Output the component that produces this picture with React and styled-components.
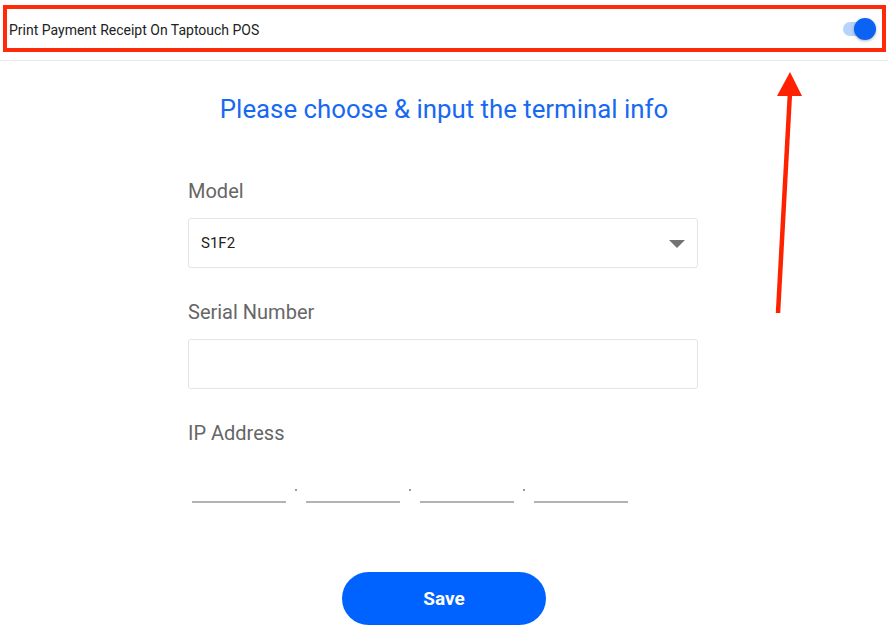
import React, { useState } from 'react'
import styled, { createGlobalStyle } from 'styled-components'

const GlobalStyle = createGlobalStyle`
  html, body {
    margin: 0;
    padding: 0;
    background: #ffffff;
  }
  body {
    font-family: Roboto, "Liberation Sans", Arial, sans-serif;
    color: #222;
  }
  * {
    box-sizing: border-box;
  }
`

const App = () => {
  const [printOn, setPrintOn] = useState(true)

  return (
    <Page>
      <GlobalStyle />
      <Header>
        <HeaderText>Print Payment Receipt On Taptouch POS</HeaderText>
        <Toggle on={printOn} onClick={() => setPrintOn(!printOn)}>
          <span className="track" />
          <span className="knob" />
        </Toggle>
        <Highlight />
      </Header>

      <Title>Please choose &amp; input the terminal info</Title>

      <Form>
        <Field>
          <Label>Model</Label>
          <SelectBox>
            <span>S1F2</span>
            <Caret />
          </SelectBox>
        </Field>

        <Field>
          <Label>Serial Number</Label>
          <TextInput />
        </Field>

        <Field>
          <Label>IP Address</Label>
          <IpRow>
            {[0, 1, 2, 3].map(index => (
              <React.Fragment key={index}>
                {index > 0 && <IpDot />}
                <IpInput />
              </React.Fragment>
            ))}
          </IpRow>
        </Field>
      </Form>

      <Footer>
        <SaveButton>Save</SaveButton>
      </Footer>

      <Arrow width="40" height="260" viewBox="0 0 40 260">
        <line x1="8" y1="251" x2="20" y2="30" stroke="#ff2200" strokeWidth="4.5" />
        <polygon points="20,10 32,34 7,34" fill="#ff2200" />
      </Arrow>
    </Page>
  )
}

export default App

const Page = styled.div`
  position: relative;
  width: 888px;
  min-height: 640px;
`

const Header = styled.div`
  position: relative;
  display: flex;
  align-items: center;
  justify-content: space-between;
  height: 61px;
  padding: 0 12px 0 9px;
  border-bottom: 1px solid #e8e8e8;
`

const HeaderText = styled.div`
  font-size: 14px;
  color: #222;
`

const Highlight = styled.div`
  position: absolute;
  top: 5px;
  left: 3px;
  right: 2px;
  height: 47px;
  border: 4px solid #ff2a0a;
  pointer-events: none;
`

const Toggle = styled.div`
  position: relative;
  width: 33px;
  height: 22px;
  margin-top: -2px;
  cursor: pointer;

  .track {
    position: absolute;
    left: 0;
    top: 4px;
    width: 30px;
    height: 14px;
    border-radius: 7px;
    background: ${props => (props.on ? '#b7d3fb' : '#d6d6d6')};
  }

  .knob {
    position: absolute;
    top: 0;
    left: ${props => (props.on ? '11px' : '0')};
    width: 22px;
    height: 22px;
    border-radius: 50%;
    background: ${props => (props.on ? '#0a63f4' : '#f5f5f5')};
    box-shadow: 0 1px 3px rgba(0, 0, 0, 0.3);
  }
`

const Title = styled.h1`
  margin: 33px 0 0;
  text-align: center;
  font-size: 25.8px;
  line-height: 30px;
  font-weight: 400;
  color: #1769f2;
`

const Form = styled.div`
  width: 510px;
  margin: 55px auto 0 188px;
  display: flex;
  flex-direction: column;
  gap: 32px;
`

const Field = styled.div`
  display: flex;
  flex-direction: column;
  gap: 15px;
`

const Label = styled.div`
  font-size: 20px;
  line-height: 24px;
  color: #666;
`

const SelectBox = styled.div`
  display: flex;
  align-items: center;
  justify-content: space-between;
  height: 50px;
  padding: 0 12px 0 12px;
  border: 1px solid #e1e6eb;
  border-radius: 3px;
  font-size: 15px;
  color: #222;
`

const Caret = styled.span`
  width: 0;
  height: 0;
  border-left: 8px solid transparent;
  border-right: 8px solid transparent;
  border-top: 8px solid #737373;
  margin-top: 2px;
`

const TextInput = styled.div`
  height: 50px;
  border: 1px solid #e1e6eb;
  border-radius: 3px;
`

const IpRow = styled.div`
  display: flex;
  align-items: flex-end;
  margin: 13px 0 0 4px;
`

const IpInput = styled.div`
  width: 94px;
  height: 30px;
  border-bottom: 2px solid #b3b3b3;
`

const IpDot = styled.span`
  width: 20px;
  height: 30px;
  position: relative;

  &::after {
    content: '';
    position: absolute;
    left: 9px;
    top: 16px;
    width: 2px;
    height: 2px;
    background: #9a9a9a;
  }
`

const Footer = styled.div`
  display: flex;
  justify-content: center;
  margin-top: 69px;
`

const SaveButton = styled.button`
  width: 204px;
  height: 53px;
  border: none;
  border-radius: 27px;
  background: #0062ff;
  color: #fff;
  font-family: Roboto, "Liberation Sans", Arial, sans-serif;
  font-size: 19px;
  font-weight: 700;
  cursor: pointer;
`

const Arrow = styled.svg`
  position: absolute;
  left: 770px;
  top: 62px;
  pointer-events: none;
`
